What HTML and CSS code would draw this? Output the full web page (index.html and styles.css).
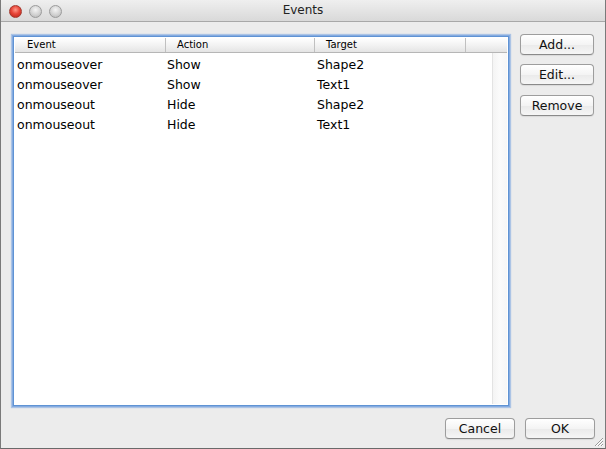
FILE: index.html
```html
<!DOCTYPE html>
<html>
<head>
<meta charset="utf-8">
<title>Events</title>
<link rel="stylesheet" href="styles.css">
</head>
<body>
<div class="window">
  <div class="titlebar">
    <div class="lights">
      <span class="light red"></span>
      <span class="light gray"></span>
      <span class="light gray"></span>
    </div>
    <div class="title">Events</div>
  </div>
  <div class="main">
    <div class="table">
      <div class="thead">
        <div class="th c1">Event</div>
        <div class="th c2">Action</div>
        <div class="th c3">Target</div>
        <div class="th c4"></div>
      </div>
      <div class="tbody">
        <div class="rows">
          <div class="row"><span class="td c1">onmouseover</span><span class="td c2">Show</span><span class="td c3">Shape2</span></div>
          <div class="row"><span class="td c1">onmouseover</span><span class="td c2">Show</span><span class="td c3">Text1</span></div>
          <div class="row"><span class="td c1">onmouseout</span><span class="td c2">Hide</span><span class="td c3">Shape2</span></div>
          <div class="row"><span class="td c1">onmouseout</span><span class="td c2">Hide</span><span class="td c3">Text1</span></div>
        </div>
        <div class="scrolltrack"></div>
      </div>
    </div>
    <div class="side">
      <button class="btn">Add...</button>
      <button class="btn">Edit...</button>
      <button class="btn">Remove</button>
    </div>
  </div>
  <div class="footer">
    <button class="btn wide">Cancel</button>
    <button class="btn wide">OK</button>
  </div>
  <svg class="grip" width="12" height="12" viewBox="0 0 12 12">
    <path d="M11 3 L3 11 M11 6 L6 11 M11 9 L9 11" stroke="#9a9a9a" stroke-width="1" fill="none"/>
    <path d="M11 4 L4 11 M11 7 L7 11 M11 10 L10 11" stroke="#ffffff" stroke-width="1" fill="none"/>
  </svg>
</div>
</body>
</html>
```
FILE: styles.css
```css
* { box-sizing: border-box; }
html, body { margin: 0; padding: 0; }
body {
  width: 606px;
  height: 449px;
  overflow: hidden;
  font-family: "DejaVu Sans", "Liberation Sans", sans-serif;
  color: #000;
}
.window {
  position: relative;
  width: 606px;
  height: 449px;
  background: #ececec;
  border-left: 1px solid #7a7a7a;
  border-right: 1px solid #7a7a7a;
  border-bottom: 1px solid #6a6a6a;
  display: flex;
  flex-direction: column;
}
.titlebar {
  height: 22px;
  flex: none;
  position: relative;
  background: linear-gradient(#efefef, #d9d9d9);
  border-bottom: 1px solid #a8a8a8;
  display: flex;
  align-items: center;
}
.lights {
  display: flex;
  gap: 7px;
  margin-left: 8px;
  margin-top: 1px;
}
.light {
  width: 13px;
  height: 13px;
  border-radius: 50%;
  display: block;
}
.light.red {
  background: radial-gradient(circle at 50% 35%, #ff9a8a 0, #e8473a 45%, #b41f14 100%);
  border: 1px solid #a33a30;
}
.light.gray {
  background: radial-gradient(circle at 50% 35%, #f4f4f4 0, #d2d2d2 55%, #b3b3b3 100%);
  border: 1px solid #9b9b9b;
}
.title {
  position: absolute;
  left: 0;
  right: 0;
  top: 0;
  height: 21px;
  line-height: 21px;
  text-align: center;
  font-size: 12px;
  color: #222;
}
.main {
  display: flex;
  padding: 13px 0 0 11px;
  gap: 10px;
}
.table {
  width: 498px;
  height: 372px;
  border: 1px solid #85abe0;
  box-shadow: inset 0 0 0 1px #5f93d4, 0 0 1px 1px rgba(130, 170, 225, 0.6);
  background: #fff;
  padding: 2px;
  display: flex;
  flex-direction: column;
}
.thead {
  height: 15px;
  flex: none;
  display: flex;
  background: linear-gradient(#ffffff, #f0f0f0 60%, #e4e4e4);
  border-bottom: 1px solid #b6b6b6;
  font-size: 10px;
  line-height: 14px;
}
.th {
  border-right: 1px solid #c0c0c0;
  height: 14px;
  margin-top: 0;
}
.thead .c1 { width: 151px; padding-left: 12px; }
.thead .c2 { width: 149px; padding-left: 11px; }
.thead .c3 { width: 151px; padding-left: 11px; }
.thead .c4 { flex: 1; border-right: none; }
.tbody {
  flex: 1;
  display: flex;
}
.rows {
  flex: 1;
  padding-top: 1px;
}
.row {
  height: 20px;
  display: flex;
  align-items: center;
  font-size: 12.5px;
}
.td { display: block; }
.row .c1 { width: 150px; padding-left: 2px; }
.row .c2 { width: 150px; padding-left: 2px; }
.row .c3 { width: 150px; padding-left: 2px; }
.scrolltrack {
  width: 15px;
  flex: none;
  border-left: 1px solid #e3e3e3;
  background: linear-gradient(90deg, #f4f4f4, #fbfbfb 50%, #f6f6f6);
}
.side {
  display: flex;
  flex-direction: column;
  gap: 9px;
  padding-top: 0;
  margin-top: -1px;
}
.btn {
  width: 74px;
  height: 21px;
  padding: 0;
  border: 1px solid #9d9d9d;
  border-bottom-color: #8a8a8a;
  border-radius: 4px;
  background: linear-gradient(#ffffff, #f4f4f4 50%, #eaeaea 51%, #f6f6f6);
  box-shadow: 0 1px 1px rgba(0, 0, 0, 0.08);
  font-family: "DejaVu Sans", "Liberation Sans", sans-serif;
  font-size: 12.5px;
  line-height: 19px;
  color: #111;
  text-align: center;
}
.side .btn:nth-child(3) { margin-top: 1px; }
.footer {
  display: flex;
  justify-content: flex-end;
  gap: 10px;
  padding-right: 10px;
  margin-top: 11px;
}
.btn.wide { width: 70px; }
.grip {
  position: absolute;
  right: 1px;
  bottom: 1px;
}
```
